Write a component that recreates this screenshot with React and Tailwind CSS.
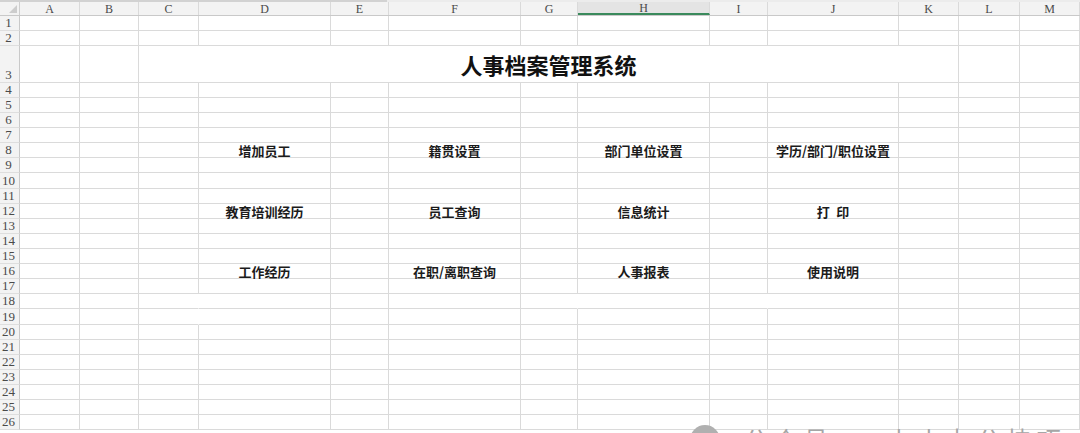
import React from 'react';

// Column letters with their pixel widths on the sheet
const COLS = [
  { n: 'A', w: 'w-[60px]' },
  { n: 'B', w: 'w-[59px]' },
  { n: 'C', w: 'w-[60px]' },
  { n: 'D', w: 'w-[132px]' },
  { n: 'E', w: 'w-[58px]' },
  { n: 'F', w: 'w-[132px]' },
  { n: 'G', w: 'w-[57px]' },
  { n: 'H', w: 'w-[132px]' },
  { n: 'I', w: 'w-[58px]' },
  { n: 'J', w: 'w-[131px]' },
  { n: 'K', w: 'w-[60px]' },
  { n: 'L', w: 'w-[61px]' },
  { n: 'M', w: 'w-[60px]' },
];

const ROW_H = {
  15: 'h-[15px]',
  16: 'h-[16px]',
  37: 'h-[37px]',
};

// Row number -> height in px
const ROWS = Array.from({ length: 26 }, (_, i) => {
  const r = i + 1;
  let h = 15;
  if (r === 3) h = 37;
  if (r === 10 || r === 19) h = 16;
  return { r, h };
});

// Menu entries placed in their cells: row -> column index -> label
const MENU = {
  8: { 3: '增加员工', 5: '籍贯设置', 7: '部门单位设置', 9: '学历/部门/职位设置' },
  12: { 3: '教育培训经历', 5: '员工查询', 7: '信息统计', 9: '打\u2002印' },
  16: { 3: '工作经历', 5: '在职/离职查询', 7: '人事报表', 9: '使用说明' },
};

// White-filled cells whose right gridline is hidden: row -> column indexes
const NO_RIGHT_LINE = {
  18: [2, 6, 8],
  19: [2],
};

const HEAD_FONT = "font-['Liberation_Serif',serif]";
const CJK_FONT = "font-['Noto_Sans_CJK_SC','Noto_Sans',sans-serif]";

function ColumnHeader() {
  return (
    <div className="flex h-[14px] bg-[#f3f3f3] border-b border-[#c9c9c9]">
      <div className="w-[20px] shrink-0 border-r border-[#cfcfcf] relative">
        <div className="absolute right-[2px] bottom-[2px] w-0 h-0 border-l-[8px] border-l-transparent border-b-[8px] border-b-[#cdcdcd]" />
      </div>
      {COLS.map((c) => {
        const active = c.n === 'H';
        return (
          <div
            key={c.n}
            className={`${c.w} shrink-0 border-r border-[#dadada] flex items-center justify-center text-[12px] leading-none text-[#4a4a4a] ${HEAD_FONT} ${
              active ? 'bg-[#e4e4e4] border-b-2 border-b-[#3a8a5c]' : ''
            }`}
          >
            {c.n}
          </div>
        );
      })}
    </div>
  );
}

function SheetRow({ r, h }) {
  const hc = ROW_H[h];
  const labels = MENU[r] || {};
  const hidden = NO_RIGHT_LINE[r] || [];
  return (
    <div className={`flex ${hc}`}>
      <div
        className={`w-[20px] shrink-0 bg-[#f3f3f3] border-r border-[#c9c9c9] border-b border-b-[#dedede] flex items-end pb-[1px] text-[13px] leading-none text-[#4a4a4a] ${HEAD_FONT}`}
      >
        <span className="w-[17px] text-center">{r}</span>
      </div>
      {r === 3 ? (
        <>
          {COLS.slice(0, 2).map((c) => (
            <div key={c.n} className={`${c.w} shrink-0 border-r border-b border-[#dadada]`} />
          ))}
          <div
            className={`w-[820px] shrink-0 border-r border-b border-[#dadada] flex items-center justify-center text-[22px] font-bold text-[#111] ${CJK_FONT}`}
          >
            人事档案管理系统
          </div>
          {COLS.slice(11).map((c) => (
            <div key={c.n} className={`${c.w} shrink-0 border-r border-b border-[#dadada]`} />
          ))}
        </>
      ) : (
        COLS.map((c, i) => (
          <div
            key={c.n}
            className={`${c.w} shrink-0 border-b border-[#dadada] ${
              hidden.includes(i) ? 'border-r border-r-white' : 'border-r'
            } flex items-center justify-center whitespace-pre text-[13px] font-bold leading-none text-[#1b1b1b] ${CJK_FONT}`}
          >
            {labels[i] || ''}
          </div>
        ))
      )}
    </div>
  );
}

export default function App() {
  return (
    <div className="relative w-[1080px] h-[433px] overflow-hidden bg-white">
      {/* thin strip left from the toolbar above the sheet */}
      <div className="flex h-[2px]">
        <div className="w-[387px] bg-[#d2d2d2]" />
        <div className="flex-1 bg-[#ececec]" />
      </div>
      <ColumnHeader />
      {ROWS.map((row) => (
        <SheetRow key={row.r} r={row.r} h={row.h} />
      ))}

      {/* watermark in the lower right corner */}
      <div className={`absolute left-[690px] top-[425px] flex items-start gap-[24px] text-[24px] leading-none text-[#a6a6a6] ${CJK_FONT}`}>
        <div className="w-[30px] h-[30px] rounded-full bg-[#b0b0b0]" />
        <span className="pt-[2px] tracking-[6px]">公众号 · 小小办公技巧</span>
      </div>
    </div>
  );
}
